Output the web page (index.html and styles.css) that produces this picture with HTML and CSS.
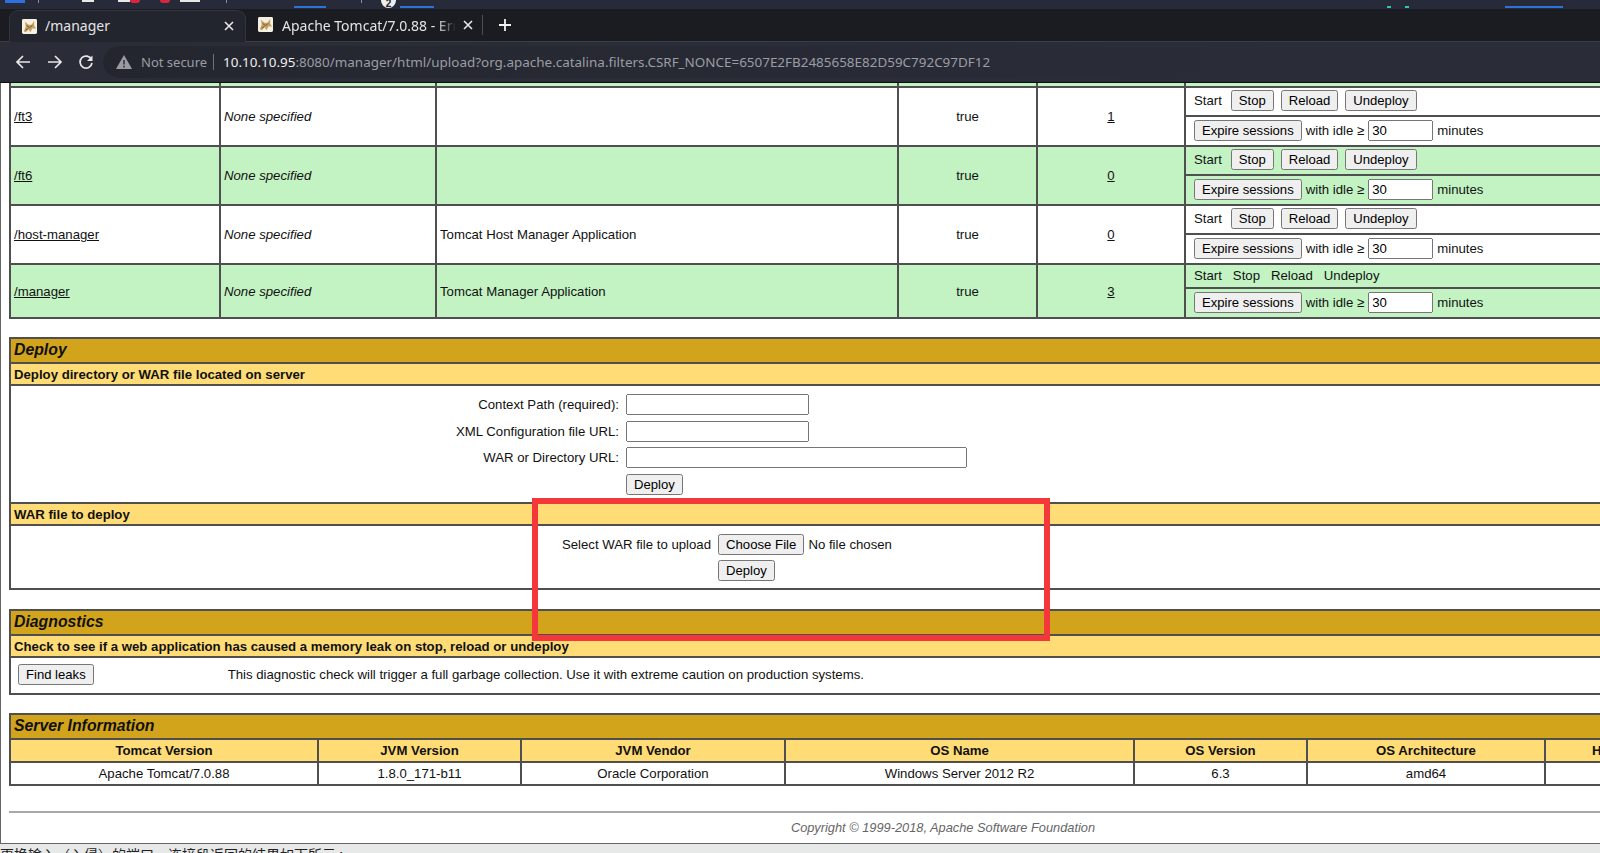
FILE: index.html
```html
<!DOCTYPE html>
<html>
<head>
<title>/manager</title>
<meta charset="utf-8">
<link rel="stylesheet" href="styles.css">
</head>
<body>

<!-- cut off desktop panel -->
<div class="panel">
  <span class="p-start"></span>
  <span class="p-sep p-sep1"></span>
  <span class="p-white p-w1"></span>
  <span class="p-white p-w2"></span>
  <span class="p-red p-r1"></span>
  <span class="p-red p-r2"></span>
  <span class="p-white p-w3"></span>
  <span class="p-sep p-sep2"></span>
  <span class="p-blue p-b1"></span>
  <span class="p-sep p-sep3"></span>
  <span class="p-badge">2</span>
  <span class="p-blue p-b2"></span>
  <span class="p-teal p-t1"></span>
  <span class="p-teal p-t2"></span>
  <span class="p-blue p-b3"></span>
</div>

<div class="tabs">
  <div class="tab tab-on">
    <svg class="fav" viewBox="0 0 16 16"><rect width="16" height="16" rx="1.5" fill="#f4f0e2"/><path d="M2 13 L4 8 L3 3 L7 6 L10 6 L13 2 L13 7 L15 10 L11 10 L9 14 L7 11 L4 14 Z" fill="#c6a060"/><path d="M5 7 L8 9 L11 7 M4 12 L7 10" stroke="#6b5a35" fill="none"/></svg>
    <span class="tab-text">/manager</span>
    <svg class="tab-x" viewBox="0 0 10 10"><path d="M1 1 L9 9 M9 1 L1 9" stroke="#e8e8e8" stroke-width="1.6"/></svg>
  </div>
  <div class="tab">
    <svg class="fav" viewBox="0 0 16 16"><rect width="16" height="16" rx="1.5" fill="#f4f0e2"/><path d="M2 13 L4 8 L3 3 L7 6 L10 6 L13 2 L13 7 L15 10 L11 10 L9 14 L7 11 L4 14 Z" fill="#c6a060"/><path d="M5 7 L8 9 L11 7 M4 12 L7 10" stroke="#6b5a35" fill="none"/></svg>
    <span class="tab-text tab-fade">Apache Tomcat/7.0.88 - Error report</span>
    <svg class="tab-x" viewBox="0 0 10 10"><path d="M1 1 L9 9 M9 1 L1 9" stroke="#e8e8e8" stroke-width="1.6"/></svg>
  </div>
  <span class="tab-sep"></span>
  <svg class="tab-plus" viewBox="0 0 12 12"><path d="M6 0 V12 M0 6 H12" stroke="#f2f2f2" stroke-width="1.8"/></svg>
</div>

<div class="toolbar">
  <svg class="nav" viewBox="0 0 16 16"><path d="M15 8 H2 M8 2 L2 8 L8 14" fill="none" stroke="#e8e8e8" stroke-width="1.7"/></svg>
  <svg class="nav" viewBox="0 0 16 16"><path d="M1 8 H14 M8 2 L14 8 L8 14" fill="none" stroke="#e8e8e8" stroke-width="1.7"/></svg>
  <svg class="nav" viewBox="0 0 16 16"><path d="M13.5 5.5 A6 6 0 1 0 14 9" fill="none" stroke="#e8e8e8" stroke-width="1.7"/><path d="M14.5 1.5 V7 H9 Z" fill="#e8e8e8"/></svg>
  <div class="omni">
    <svg class="warn" viewBox="0 0 16 14"><path d="M8 0 L16 14 H0 Z" fill="#9a9ca2"/><path d="M8 5 V9.5 M8 10.8 V12.4" stroke="#2a2c36" stroke-width="1.5"/></svg>
    <span class="insecure">Not secure</span>
    <span class="omni-sep"></span>
    <span class="url"><b>10.10.10.95</b>:8080/manager/html/upload?org.apache.catalina.filters.CSRF_NONCE=6507E2FB2485658E82D59C792C97DF12</span>
  </div>
</div>

<div class="page">
  <div class="wrap">

    <table class="apps">
      <colgroup><col class="c1"><col class="c2"><col class="c3"><col class="c4"><col class="c5"><col></colgroup>
      <tr class="stub green"><td></td><td></td><td></td><td></td><td></td><td></td></tr>

      <tr>
        <td rowspan="2"><a href="#">/ft3</a></td>
        <td rowspan="2"><i>None specified</i></td>
        <td rowspan="2"></td>
        <td rowspan="2" class="mid">true</td>
        <td rowspan="2" class="mid"><a href="#">1</a></td>
        <td class="cmd"><div class="cmds"><span class="start">Start</span><button>Stop</button><button>Reload</button><button>Undeploy</button></div></td>
      </tr>
      <tr>
        <td class="cmd2"><div class="cmds expire"><button>Expire sessions</button><span>with idle &ge;</span><input class="idle" type="text" value="30"><span>minutes</span></div></td>
      </tr>

      <tr class="green">
        <td rowspan="2"><a href="#">/ft6</a></td>
        <td rowspan="2"><i>None specified</i></td>
        <td rowspan="2"></td>
        <td rowspan="2" class="mid">true</td>
        <td rowspan="2" class="mid"><a href="#">0</a></td>
        <td class="cmd"><div class="cmds"><span class="start">Start</span><button>Stop</button><button>Reload</button><button>Undeploy</button></div></td>
      </tr>
      <tr class="green">
        <td class="cmd2"><div class="cmds expire"><button>Expire sessions</button><span>with idle &ge;</span><input class="idle" type="text" value="30"><span>minutes</span></div></td>
      </tr>

      <tr>
        <td rowspan="2"><a href="#">/host-manager</a></td>
        <td rowspan="2"><i>None specified</i></td>
        <td rowspan="2">Tomcat Host Manager Application</td>
        <td rowspan="2" class="mid">true</td>
        <td rowspan="2" class="mid"><a href="#">0</a></td>
        <td class="cmd"><div class="cmds"><span class="start">Start</span><button>Stop</button><button>Reload</button><button>Undeploy</button></div></td>
      </tr>
      <tr>
        <td class="cmd2"><div class="cmds expire"><button>Expire sessions</button><span>with idle &ge;</span><input class="idle" type="text" value="30"><span>minutes</span></div></td>
      </tr>

      <tr class="green">
        <td rowspan="2"><a href="#">/manager</a></td>
        <td rowspan="2"><i>None specified</i></td>
        <td rowspan="2">Tomcat Manager Application</td>
        <td rowspan="2" class="mid">true</td>
        <td rowspan="2" class="mid"><a href="#">3</a></td>
        <td class="cmd-plain"><div class="cmds plain"><span>Start</span><span>Stop</span><span>Reload</span><span>Undeploy</span></div></td>
      </tr>
      <tr class="green">
        <td class="cmd2"><div class="cmds expire"><button>Expire sessions</button><span>with idle &ge;</span><input class="idle" type="text" value="30"><span>minutes</span></div></td>
      </tr>
    </table>

    <table class="box box-deploy">
      <tr><td class="title">Deploy</td></tr>
      <tr><td class="head">Deploy directory or WAR file located on server</td></tr>
      <tr><td class="deploy-body">
        <div class="form-dir">
          <label>Context Path (required):</label><input class="in-short" type="text">
          <label>XML Configuration file URL:</label><input class="in-short" type="text">
          <label>WAR or Directory URL:</label><input class="in-long" type="text">
          <span></span><div><button>Deploy</button></div>
        </div>
      </td></tr>
      <tr><td class="head">WAR file to deploy</td></tr>
      <tr><td class="war-body">
        <div class="form-war">
          <label>Select WAR file to upload</label><input type="file">
          <span></span><div><button>Deploy</button></div>
        </div>
      </td></tr>
    </table>

    <table class="box box-diag">
      <tr><td class="title">Diagnostics</td></tr>
      <tr><td class="head">Check to see if a web application has caused a memory leak on stop, reload or undeploy</td></tr>
      <tr><td class="diag-body">
        <div class="diag"><button>Find leaks</button><span>This diagnostic check will trigger a full garbage collection. Use it with extreme caution on production systems.</span></div>
      </td></tr>
    </table>

    <table class="box server">
      <colgroup><col class="s1"><col class="s2"><col class="s3"><col class="s4"><col class="s5"><col class="s6"><col class="s7"><col></colgroup>
      <tr><td class="title" colspan="8">Server Information</td></tr>
      <tr class="server-head">
        <td>Tomcat Version</td><td>JVM Version</td><td>JVM Vendor</td><td>OS Name</td><td>OS Version</td><td>OS Architecture</td><td>Hostname</td><td>IP Address</td>
      </tr>
      <tr class="server-row">
        <td>Apache Tomcat/7.0.88</td><td>1.8.0_171-b11</td><td>Oracle Corporation</td><td>Windows Server 2012 R2</td><td>6.3</td><td>amd64</td><td>JERRY</td><td>10.10.10.95</td>
      </tr>
    </table>

    <hr class="rule">
    <div class="copy">Copyright &copy; 1999-2018, Apache Software Foundation</div>
  </div>
</div>

<div class="caption"><span>更换输入（入侵）的端口，连接段返回的结果如下所示 : - - -</span></div>

<!-- red mark drawn on the screenshot -->
<div class="mark"></div>

</body>
</html>
```
FILE: styles.css
```css
* {box-sizing: border-box;}
html, body {margin: 0; height: 100%; overflow: hidden;}
body {display: flex; flex-direction: column; position: relative; font-family: "Liberation Sans", Arial, sans-serif; font-size: 13.2px; color: #111; background: #fff;}

/* desktop panel */
.panel {height: 9px; flex: none; display: flex; align-items: flex-start; background: #272a39; overflow: hidden;}
.panel span {display: block; flex: none;}
.p-start {width: 20px; height: 3px; margin-left: 5px; background: #2f6fe0;}
.p-sep {width: 1px; height: 3px; background: #8a8c94;}
.p-sep1 {margin-left: 13px;}
.p-white {height: 2px; background: #e8e8e8;}
.p-w1 {width: 12px; margin-left: 43px;}
.p-w2 {width: 12px; margin-left: 24px;}
.p-red {width: 10px; height: 3px; border-radius: 0 0 5px 5px; background: #d7263d;}
.p-r1 {margin-left: 0;}
.p-r2 {margin-left: 20px;}
.p-w3 {width: 20px; margin-left: 10px;}
.p-sep2 {margin-left: 26px;}
.p-blue {height: 2px; margin-top: 6px; background: #2d74da;}
.p-b1 {width: 32px; margin-left: 67px;}
.p-sep3 {margin-left: 35px;}
.p-badge {width: 15px; height: 15px; margin: -7px 0 0 19px; border-radius: 50%; background: #eee; color: #222; font-size: 10px; font-weight: bold; line-height: 22px; text-align: center;}
.p-b2 {width: 34px; margin-left: 4px;}
.p-teal {width: 4px; height: 2px; margin-top: 6px; background: #2ec4b6;}
.p-t1 {margin-left: 953px;}
.p-t2 {margin-left: 14px;}
.p-b3 {width: 58px; margin-left: 96px;}

/* tabs */
.tabs {height: 33px; flex: none; display: flex; align-items: flex-end; padding-left: 9px; background: #1b1c22; border-bottom: 1px solid #3b3c44; font-family: "Noto Sans", sans-serif; font-size: 14px; color: #e4e4e6;}
.tab {display: flex; align-items: center; height: 32px; padding-bottom: 1px;}
.tab-on {width: 237px; margin-bottom: -1px; padding: 0 11px 1px 12px; background: #23252e; border: 1px solid #33353e; border-bottom: 0; border-radius: 9px 9px 0 0;}
.fav {width: 15px; height: 15px; flex: none;}
.tab-text {margin-left: 8px; white-space: nowrap; overflow: hidden;}
.tab-on .tab-text {flex: 1; margin-bottom: 2px;}
.tab-on + .tab {width: 237px; padding-left: 12px;}
.tab-fade {width: 174px; margin: 1px 0 0 9px; -webkit-mask-image: linear-gradient(to right, #000 155px, transparent 174px);}
.tab-x {width: 10px; height: 10px; flex: none;}
.tab-on + .tab .tab-x {margin-left: 7px;}
.tab-sep {width: 1px; height: 20px; margin: 0 0 6px -1px; background: #4c4d55;}
.tab-plus {width: 12px; height: 12px; margin: 0 0 10px 16px;}

/* toolbar */
.toolbar {height: 41px; flex: none; display: flex; align-items: center; padding-left: 15px; background: #2a2c38; border-bottom: 1px solid #0e0f12;}
.nav {width: 16px; height: 16px; margin-right: 16px;}
.nav:nth-child(3) {margin-left: -1px;}
.omni {display: flex; align-items: center; width: 1390px; height: 32px; margin-left: -7px; padding-left: 10px; border-radius: 16px 0 0 16px; background: linear-gradient(to right, #24262f, #2a2c38 85%); font-family: "Noto Sans", sans-serif; font-size: 13.45px; color: #9b9da5;}
.warn {width: 16px; height: 14px; margin-left: 3px;}
.insecure {margin-left: 9px; font-size: 13px;}
.omni-sep {width: 1px; height: 16px; margin: 0 9px 0 6px; background: #70727a;}
.url b {font-weight: normal; color: #eeeeef;}

/* page */
.page {flex: 1; min-height: 0; overflow: hidden; padding-left: 8px; border-left: 1px solid #666; border-bottom: 1px solid #666;}
.wrap {width: 1868px;}
table {width: 100%; border-collapse: collapse; table-layout: fixed;}
td {border: 2px solid #4f4f4f; padding: 3px;}
a {color: #111;}
button {font-family: "Liberation Sans", Arial, sans-serif; font-size: 13.1px;}
input {font-family: "Liberation Sans", Arial, sans-serif; font-size: 13.2px;}

.green td {background: #c3f3c3;}
.mid {text-align: center;}
.stub td {height: 4px; padding: 0; border-top: 0;}
.c1 {width: 210px;}
.c2 {width: 216px;}
.c3 {width: 462px;}
.c4 {width: 139px;}
.c5 {width: 148px;}

.apps td.cmd {height: 29px; padding: 0 3px 2px 8px;}
.apps td.cmd2 {height: 30px; padding: 0 3px 2px 8px;}
.apps td.cmd-plain {height: 24px; padding: 0 3px 2px 8px;}
.cmds {display: flex; align-items: center; gap: 7px;}
.start {margin-right: 2px;}
.plain {gap: 11px;}
.expire {gap: 4px;}
.idle {width: 65px; height: 21px;}

.box {margin-top: 18px;}
.box-diag {margin-top: 19px;}
.title {height: 25px; padding: 0 3px 2px; background: #d2a41c; font-size: 15.8px; font-weight: bold; font-style: italic;}
.head {height: 22px; padding: 0 3px; background: #ffdc75; font-weight: bold;}

.deploy-body {height: 118px; padding: 8px 3px 0; vertical-align: top;}
.form-dir {display: grid; grid-template-columns: 605px 1fr; column-gap: 7px; row-gap: 5.5px; align-items: center;}
.form-dir label, .form-war label {text-align: right;}
.in-short {width: 183px; height: 21px;}
.in-long {width: 341px; height: 21px;}

.war-body {height: 64px; padding: 8px 3px 0; vertical-align: top;}
.form-war {display: grid; grid-template-columns: 697px 1fr; column-gap: 7px; row-gap: 5px; align-items: center;}

.diag-body {height: 37px; padding: 0 3px 2px 7px;}
.diag {display: flex; align-items: center; gap: 134px;}

.s1 {width: 308px;}
.s2 {width: 203px;}
.s3 {width: 264px;}
.s4 {width: 349px;}
.s5 {width: 173px;}
.s6 {width: 238px;}
.s7 {width: 158px;}
.server-head td {height: 23px; padding: 0 3px; background: #ffdc75; font-weight: bold; text-align: center;}
.server-row td {height: 23px; padding: 0 3px; text-align: center;}

.rule {height: 2px; margin: 25px 0 0; border: 0; background: #a8a8a8;}
.copy {margin-top: 7px; text-align: center; font-size: 12.8px; font-style: italic; color: #666;}

/* bottom of the page behind the browser */
.caption {height: 9px; flex: none; overflow: hidden; background: #e7e8e8; font-family: "Noto Sans CJK SC", sans-serif; font-size: 14px; line-height: 20px; color: #222;}

.mark {position: absolute; left: 532px; top: 498px; width: 518px; height: 143px; border: 6px solid #f4373b;}
```
